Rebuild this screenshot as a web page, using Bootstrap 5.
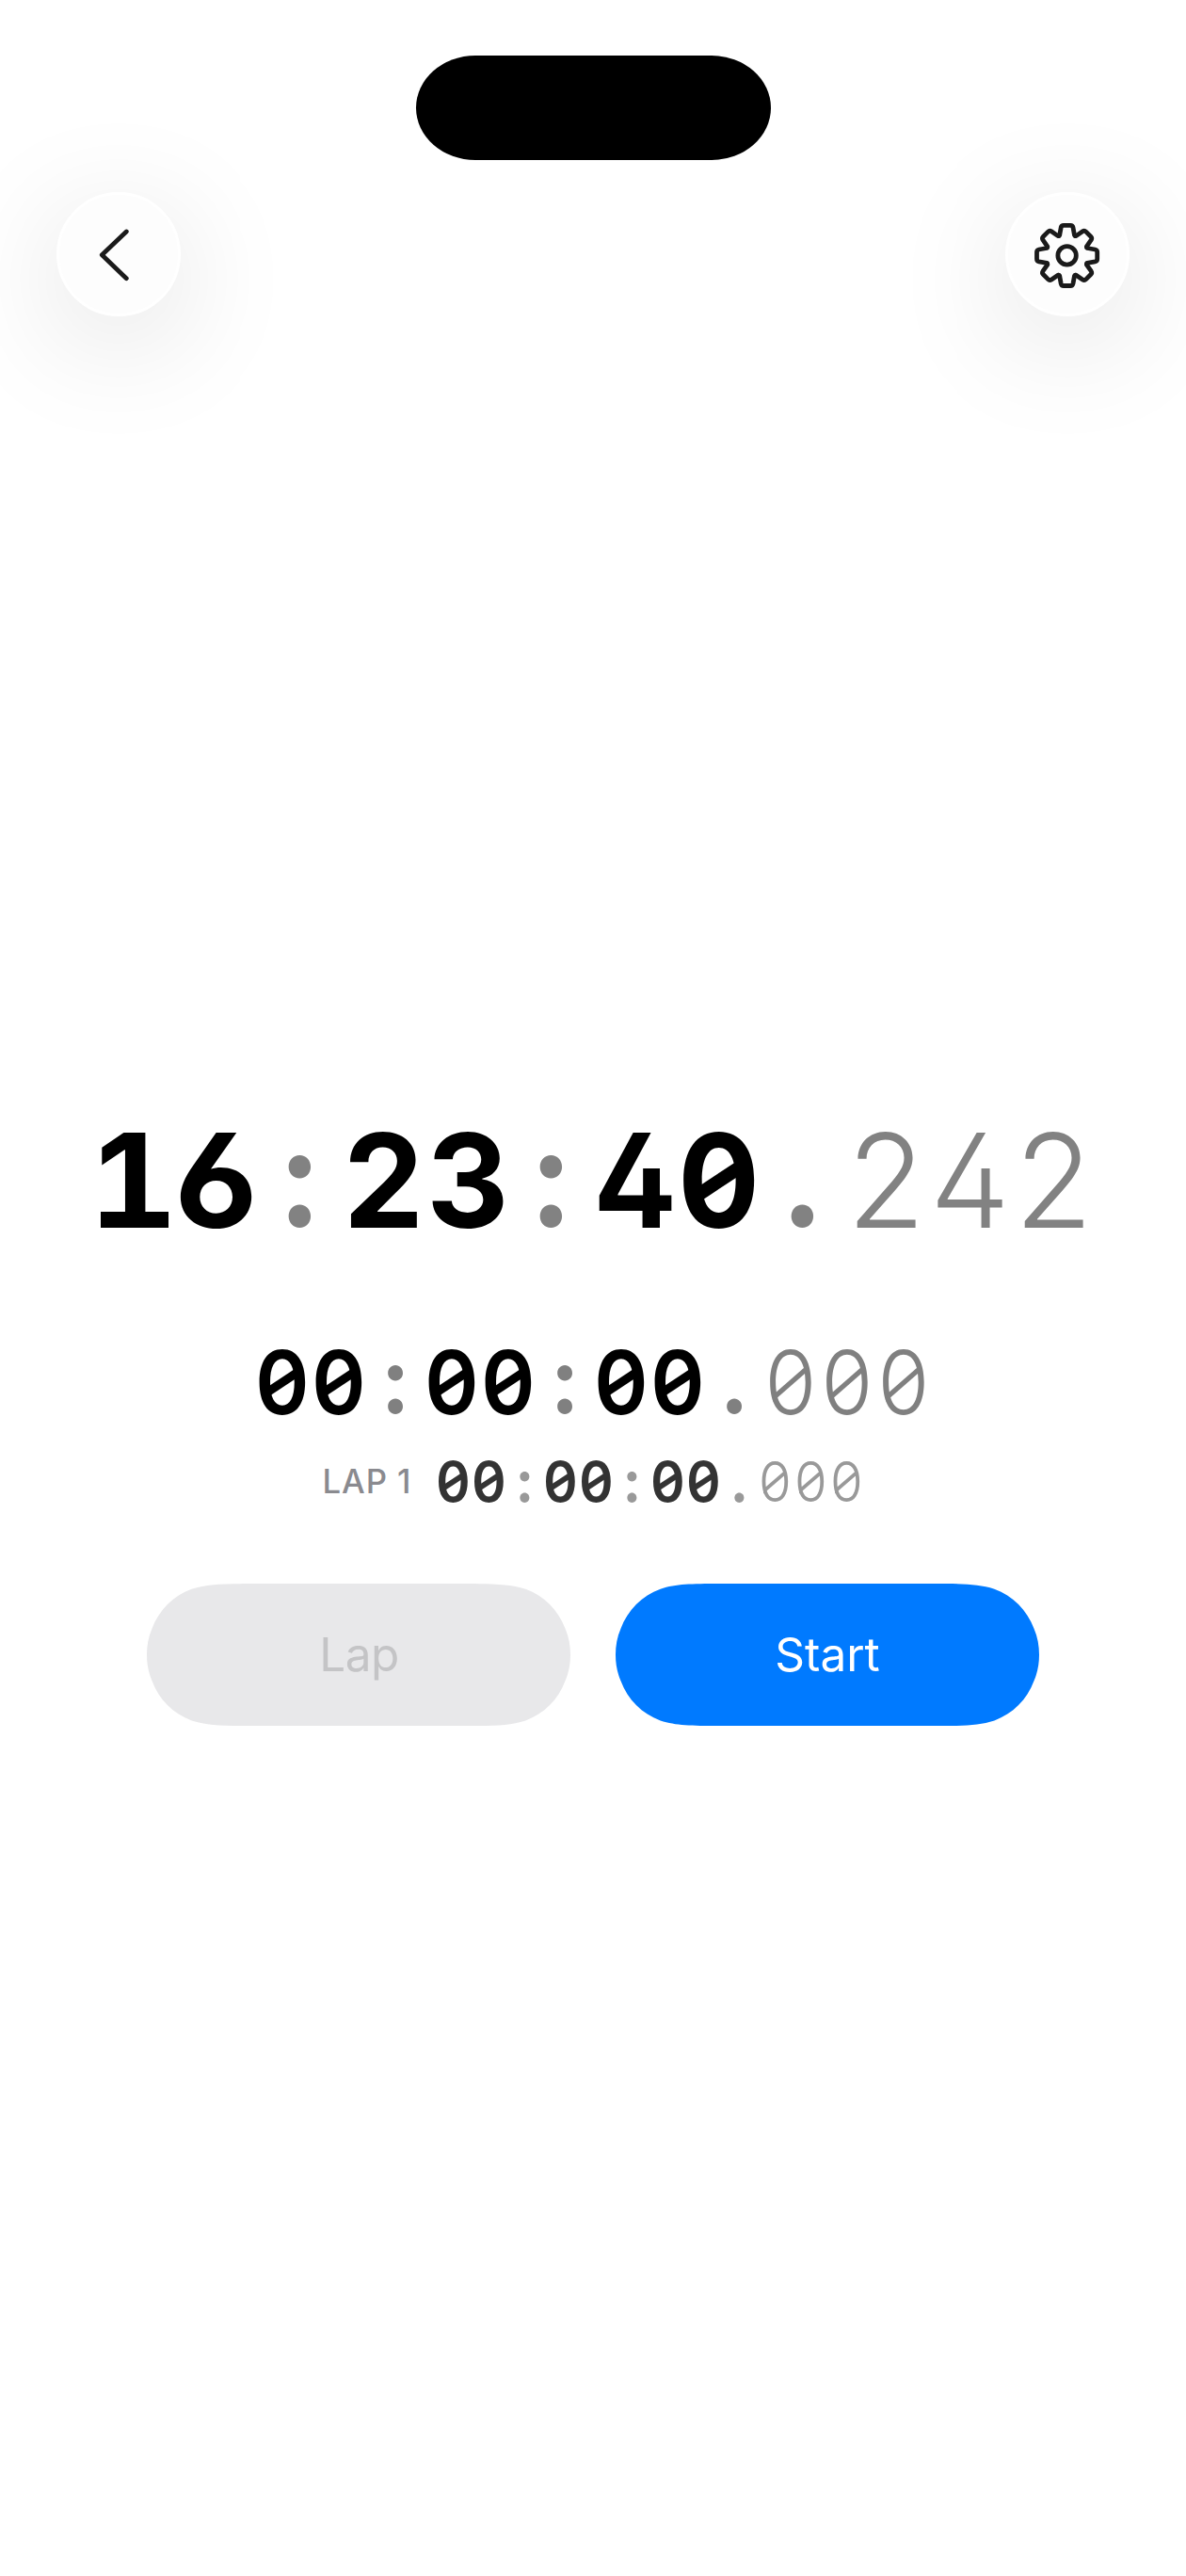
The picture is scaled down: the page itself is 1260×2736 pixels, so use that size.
<!DOCTYPE html>
<html lang="en">
<head>
<meta charset="utf-8">
<meta name="viewport" content="width=device-width, initial-scale=1">
<title>Stopwatch</title>
<link href="https://cdn.jsdelivr.net/npm/bootstrap@5.3.0/dist/css/bootstrap.min.css" rel="stylesheet">
<style>
body{font-family:Inter,"Liberation Sans",sans-serif;background:#fff;color:#000}
.screen{height:2736px;overflow:hidden}
.island-row{padding-top:59px}
.island{width:377px;height:111px;background:#000;border-radius:63px/55.5px}
.topbar{padding:34px 60px 0}
.round-btn{width:132px;height:132px;padding:0;background:#fdfdfd;border:3px solid #fff;border-radius:50%;box-shadow:0 26px 128px rgba(0,0,0,.125)}
.clock{line-height:1;font-feature-settings:"cv02" 1,"cv03" 1}
.clock i{font-style:normal;display:flex;justify-content:center;width:var(--cell);flex:none;position:relative}
.clock i b{font-weight:inherit;display:block;transform:scaleX(var(--sx,.98))}
.clock .sep{color:var(--dim);font-weight:650}
.clock .sep b{transform:translateY(-.008em) scaleY(1.05);transform-origin:50% 86.4%}
.clock .ms{color:var(--dim);font-weight:var(--msw)}
/* zero: the slash is a skewed bar laid across the counter */
.clock .zero{--sx:.93}
.clock .zero::after{content:"";position:absolute;left:50%;top:50%;width:.4em;height:.122em;margin:-.061em 0 0 -.2em;background:currentColor;transform:skewY(-33.5deg)}
.clock .ms.zero{--sx:.95}
.clock .ms.zero::after{width:.41em;height:.078em;margin:-.039em 0 0 -.205em;transform:skewY(-41deg)}
.clock .six{--sx:1.04}
.clock .four{--sx:.95}
/* one: the foot serif */
.clock .one b{transform:translateX(-8px) scaleX(1.04)}
.clock .one::after{content:"";position:absolute;left:11px;width:72px;height:17px;background:#000;top:102px}
.clock-main{--cell:89px;--dim:#828282;--msw:300;font-size:138.5px;font-weight:700;margin-top:849px}
.clock-total{--cell:60px;--dim:#808080;--msw:320;font-size:93.4px;font-weight:600;margin-top:98px}
.clock-lap{--cell:38px;--dim:#999;--msw:320;font-size:59.2px;font-weight:600;color:#333}
.lap-row{margin-top:29px;gap:24px;line-height:1}
.lap-label{font-size:34.8px;font-weight:500;color:#8a8a8f;line-height:1;width:97px;white-space:nowrap;padding-left:1px;letter-spacing:.9px}
.actions{gap:48px;margin-top:79px}
.pill{width:450px;height:151px;border:0;border-radius:0;font-size:49.5px;line-height:1;padding:0;
clip-path:path("M115 0H335C368 0 384.6 0 402.4 5.6C421.9 12.7 437.3 28 444.4 47.5C448.5 57 450 66 450 75.5C450 85 448.5 94 444.4 103.5C437.3 123 421.9 138.3 402.4 145.4C384.6 151 368 151 335 151H115C82 151 65.4 151 47.6 145.4C28.1 138.3 12.7 123 5.6 103.5C1.5 94 0 85 0 75.5C0 66 1.5 57 5.6 47.5C12.7 28 28.1 12.7 47.6 5.6C65.4 0 82 0 115 0Z")}
.pill-lap,.pill-lap:disabled{background:#e8e8ea;color:#c4c4c6;opacity:1;letter-spacing:-.6px;padding-left:1px}
.pill-start{background:#007aff;color:#fff}
</style>
</head>
<body>
<main class="screen d-flex flex-column">
  <div class="island-row d-flex justify-content-center"><div class="island"></div></div>
  <nav class="topbar d-flex justify-content-between">
    <button class="btn round-btn" aria-label="Back"><svg class="d-block" width="126" height="126" viewBox="0 0 126 126" fill="none" stroke="#1a1a1a" stroke-width="4.8" stroke-linecap="round" stroke-linejoin="round"><path d="M71.3 39L45.3 63.7L71.3 88.7"/></svg></button>
    <button class="btn round-btn" aria-label="Settings"><svg class="d-block" width="126" height="126" viewBox="0 0 126 126" fill="none" stroke="#1a1a1a" stroke-width="4.8" stroke-linecap="round" stroke-linejoin="round">
      <defs><path id="tooth" d="M-8.7 -20.9L-7.9 -21.5L-6.4 -29.8Q-5.9 -32.1 -3.6 -32.1H3.6Q5.9 -32.1 6.4 -29.8L7.9 -21.5L8.7 -20.9"/></defs>
      <g transform="translate(62.6 64.4)"><circle r="9.7"/><use href="#tooth"/><use href="#tooth" transform="rotate(45)"/><use href="#tooth" transform="rotate(90)"/><use href="#tooth" transform="rotate(135)"/><use href="#tooth" transform="rotate(180)"/><use href="#tooth" transform="rotate(225)"/><use href="#tooth" transform="rotate(270)"/><use href="#tooth" transform="rotate(315)"/></g></svg></button>
  </nav>
  <div class="clock clock-main d-flex justify-content-center"><i class="one"><b>1</b></i><i class="six"><b>6</b></i><i class="sep"><b>:</b></i><i><b>2</b></i><i><b>3</b></i><i class="sep"><b>:</b></i><i class="four"><b>4</b></i><i class="zero"><b>0</b></i><i class="sep"><b>.</b></i><i class="ms"><b>2</b></i><i class="ms"><b>4</b></i><i class="ms"><b>2</b></i></div>
  <div class="clock clock-total d-flex justify-content-center"><i class="zero"><b>0</b></i><i class="zero"><b>0</b></i><i class="sep"><b>:</b></i><i class="zero"><b>0</b></i><i class="zero"><b>0</b></i><i class="sep"><b>:</b></i><i class="zero"><b>0</b></i><i class="zero"><b>0</b></i><i class="sep"><b>.</b></i><i class="ms zero"><b>0</b></i><i class="ms zero"><b>0</b></i><i class="ms zero"><b>0</b></i></div>
  <div class="lap-row d-flex justify-content-center align-items-center">
    <span class="lap-label">LAP 1</span>
    <div class="clock clock-lap d-flex"><i class="zero"><b>0</b></i><i class="zero"><b>0</b></i><i class="sep"><b>:</b></i><i class="zero"><b>0</b></i><i class="zero"><b>0</b></i><i class="sep"><b>:</b></i><i class="zero"><b>0</b></i><i class="zero"><b>0</b></i><i class="sep"><b>.</b></i><i class="ms zero"><b>0</b></i><i class="ms zero"><b>0</b></i><i class="ms zero"><b>0</b></i></div>
  </div>
  <div class="actions d-flex justify-content-center">
    <button class="btn pill pill-lap" disabled>Lap</button>
    <button class="btn pill pill-start">Start</button>
  </div>
</main>
<script src="https://cdn.jsdelivr.net/npm/bootstrap@5.3.0/dist/js/bootstrap.bundle.min.js"></script>
</body>
</html>
